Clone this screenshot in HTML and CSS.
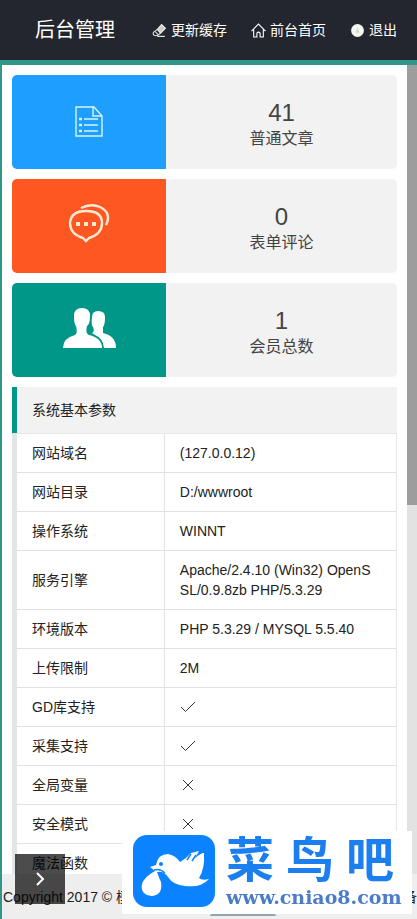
FILE: index.html
```html
<!DOCTYPE html>
<html lang="zh-CN">
	<head>
		<meta charset="UTF-8">
		<meta name="viewport" content="width=device-width, initial-scale=1">
		<title>后台管理</title>
		<link rel="stylesheet" href="styles.css">
	</head>
	<body>
		<header class="header">
			<h1 class="title">后台管理</h1>
			<nav class="nav">
				<a href="#">
					<svg class="icon" viewBox="0 0 14 14"><path d="M5 6L9 1.5L12.5 5L8 9.5z" fill="#ccc" stroke="#eee"/><path d="M5 6L1.5 8.5Q.5 10 2 11.5Q4 12.5 6 11L8 9.5M3 8L6 11M5 12.5H12" fill="none" stroke="#ddd"/></svg>
					更新缓存
				</a>
				<a href="#">
					<svg class="icon" viewBox="0 0 14 14"><path d="M.5 7.5L7 1L13.5 7.5M2.5 6V13H5.5V9.5Q7 7.5 8.5 9.5V13H11.5V6" fill="none" stroke="#fff"/></svg>
					前台首页
				</a>
				<a href="#">
					<svg class="icon" viewBox="0 0 14 14"><circle cx="7" cy="7" r="6" fill="#f5f8f0"/><path d="M7 4L9 9H5z" fill="#d5dccb"/></svg>
					退出
				</a>
			</nav>
		</header>
		<div class="body">
			<main class="main">
				<a class="card" href="#">
					<span class="card-icon blue">
						<svg width="50" height="50" viewBox="0 0 50 50" fill="none" stroke="#d8f4ff" stroke-width="1.4"><path d="M12 10H30L38 19V39H12zM29 10V19H38M20 22H34M20 28H34M20 34H34"/><path d="M15 22H18M15 28H18M15 34H18" stroke-width="2.4"/></svg>
					</span>
					<span class="card-text"><b>41</b><i>普通文章</i></span>
				</a>
				<a class="card" href="#">
					<span class="card-icon orange">
						<svg width="50" height="50" viewBox="0 0 50 50" fill="none" stroke="#ffebd3" stroke-width="2.4"><path d="M19 37Q6 33 6 22Q7 10 22 10Q38 10 38 22Q38 33 25 37L22 40z"/><path d="M17 7Q27 2 36 6Q48 12 42 24"/><path d="M12 23H16M20 23H24M28 23H32" stroke-width="4"/></svg>
					</span>
					<span class="card-text"><b>0</b><i>表单评论</i></span>
				</a>
				<a class="card" href="#">
					<span class="card-icon green">
						<svg width="54" height="50" viewBox="0 0 54 50"><path d="M30 28Q33 26 31 22Q29 20 30 12Q30 6 36 6Q43 6 43 12Q43 20 41 22V28Q54 31 54 43H42Q41 33 33 30z" fill="#fff"/><path d="M1 43Q1 33 13 30Q16 28 14 21Q12 19 12 11Q12 3 20 3Q28 3 28 11Q28 19 25 21Q23 28 27 30Q40 33 40 43z" fill="#fff"/></svg>
					</span>
					<span class="card-text"><b>1</b><i>会员总数</i></span>
				</a>
				<section class="params">
					<h2>系统基本参数</h2>
					<table>
						<tr><th scope="row">网站域名</th><td>(127.0.0.12)</td></tr>
						<tr><th scope="row">网站目录</th><td>D:/wwwroot</td></tr>
						<tr><th scope="row">操作系统</th><td>WINNT</td></tr>
						<tr><th scope="row">服务引擎</th><td>Apache/2.4.10 (Win32) OpenSSL/0.9.8zb PHP/5.3.29</td></tr>
						<tr><th scope="row">环境版本</th><td>PHP 5.3.29 / MYSQL 5.5.40</td></tr>
						<tr><th scope="row">上传限制</th><td>2M</td></tr>
						<tr><th scope="row">GD库支持</th><td><svg class="mark" viewBox="0 0 16 16"><path d="M1 8L5.5 12.5L15 3"/></svg></td></tr>
						<tr><th scope="row">采集支持</th><td><svg class="mark" viewBox="0 0 16 16"><path d="M1 8L5.5 12.5L15 3"/></svg></td></tr>
						<tr><th scope="row">全局变量</th><td><svg class="mark" viewBox="0 0 16 16"><path d="M3 3L13 13M13 3L3 13"/></svg></td></tr>
						<tr><th scope="row">安全模式</th><td><svg class="mark" viewBox="0 0 16 16"><path d="M3 3L13 13M13 3L3 13"/></svg></td></tr>
						<tr><th scope="row">魔法函数</th><td></td></tr>
					</table>
				</section>
			</main>
			<div class="scrollbar"><div class="thumb"></div></div>
		</div>
		<footer class="footer">
			<span>Copyright 2017 © 模</span>
			<span>备</span>
		</footer>
		<button class="menu-btn" type="button" aria-label="展开菜单">
			<svg width="16" height="16" viewBox="0 0 16 16" fill="none" stroke="#fff" stroke-width="2"><path d="M5 2L11 8L5 14"/></svg>
		</button>
		<div class="watermark">
			<svg class="bird" viewBox="0 0 82 72">
				<rect width="82" height="72" rx="14" fill="#0b82ff"/>
				<path d="M23 30Q25 19 35 19Q42 20 47 27Q54 23 58 18L66 16L62 23Q68 18 71 18Q72 34 66 43Q69 46 76 44Q68 53 52 51Q40 50 35 42Q31 36 24 37Q26 43 28 47Q30 60 19 61Q7 60 9 49Q11 42 22 36L17 32z" fill="#fff"/>
				<circle cx="28" cy="29" r="2" fill="#0b82ff"/>
				<path d="M21 35Q27 33 32 38M58 19L54 25M63 20L59 26" fill="none" stroke="#0b82ff" stroke-width="1.5"/>
			</svg>
			<div class="brand">
				<div class="brand-name"><span>菜</span><span>鸟</span><span>吧</span></div>
				<div class="brand-url">www.cniao8.com</div>
			</div>
		</div>
	</body>
</html>
```
FILE: styles.css
```css
*{
	box-sizing: border-box;
}
body,h1,h2{
	margin: 0;
	padding: 0;
}
body{
	display: flex;
	flex-direction: column;
	height: 100vh;
	overflow: hidden;
	font: 14px/20px "Liberation Sans", "Noto Sans CJK SC", sans-serif;
	color: #222;
	background: #fff;
}
a{
	color: inherit;
	text-decoration: none;
}
.header{
	display: flex;
	align-items: center;
	justify-content: space-between;
	flex: none;
	height: 65px;
	padding: 0 20px 0 35px;
	color: #fff;
	background: #23262e;
	border-bottom: 5px solid #2f9688;
}
.title{
	font-size: 20px;
	font-weight: normal;
}
.nav{
	display: flex;
	gap: 24px;
}
.nav a{
	display: flex;
	align-items: center;
	gap: 4px;
}
.icon{
	width: 15px;
	height: 15px;
}
.body{
	display: flex;
	flex: 1;
	min-height: 0;
	border-left: 2px solid #2f9688;
}
.main{
	flex: 1;
	min-width: 0;
	padding: 10px;
	overflow: hidden;
}
.scrollbar{
	width: 10px;
	background: #e2e2e2;
}
.thumb{
	height: 440px;
	background: #9d9d9d;
}

.card{
	display: flex;
	height: 94px;
	margin-bottom: 10px;
	border-radius: 5px;
	overflow: hidden;
	background: #f2f2f2;
}
.card-icon{
	display: flex;
	align-items: center;
	justify-content: center;
	width: 40%;
}
.blue{
	background: #1e9fff;
}
.orange{
	background: #ff5722;
}
.green{
	background: #009688;
}
.card-text{
	display: flex;
	flex: 1;
	flex-direction: column;
	align-items: center;
	justify-content: center;
	padding-top: 6px;
	color: #444;
}
.card-text b{
	font-size: 24px;
	font-weight: normal;
	line-height: 28px;
}
.card-text i{
	font-size: 16px;
	font-style: normal;
	line-height: 24px;
}

.params h2{
	padding: 13px 15px;
	font-size: 14px;
	font-weight: normal;
	background: #f2f2f2;
	border-left: 5px solid #009688;
}
.params table{
	width: 100%;
	border-collapse: separate;
	border-spacing: 0;
	border-top: 1px solid #e6e6e6;
	border-left: 5px solid #e2e4e6;
	border-right: 1px solid #e6e6e6;
}
.params th,
.params td{
	height: 39px;
	padding: 9px 20px 9px 15px;
	border-bottom: 1px solid #e2e2e2;
	font-weight: normal;
	text-align: left;
	word-break: break-all;
}
.params th{
	width: 39%;
	border-right: 1px solid #e2e2e2;
}
.mark{
	display: block;
	width: 16px;
	height: 16px;
	fill: none;
	stroke: #333;
}

.footer{
	display: flex;
	justify-content: space-between;
	flex: none;
	height: 45px;
	padding-left: 1px;
	line-height: 46px;
	background: #eee;
	border-left: 2px solid #2f9688;
}
.menu-btn{
	position: fixed;
	left: 15px;
	bottom: 15px;
	display: flex;
	align-items: center;
	justify-content: center;
	width: 50px;
	height: 50px;
	padding: 0;
	border: 0;
	background: rgba(0,0,0,.7);
}
.watermark{
	position: fixed;
	right: 5px;
	bottom: 5px;
	display: flex;
	align-items: flex-start;
	gap: 11px;
	width: 290px;
	height: 83px;
	padding: 4px 8px 0 11px;
	background: #fff;
}
.watermark::after{
	content: "";
	position: absolute;
	top: 100%;
	left: 88px;
	width: 66px;
	height: 2px;
	border-radius: 33px 33px 0 0;
	background: #8fa3b2;
}
.bird{
	flex: none;
	width: 82px;
	height: 72px;
}
.brand{
	flex: 1;
	min-width: 0;
	color: #1c7ff0;
}
.brand-name{
	display: flex;
	justify-content: space-between;
	padding-right: 10px;
	font-size: 48px;
	font-weight: bold;
	line-height: 52px;
}
.brand-url{
	font: bold 19px/20px "DejaVu Serif", serif;
	color: #4b7cc8;
}
```
